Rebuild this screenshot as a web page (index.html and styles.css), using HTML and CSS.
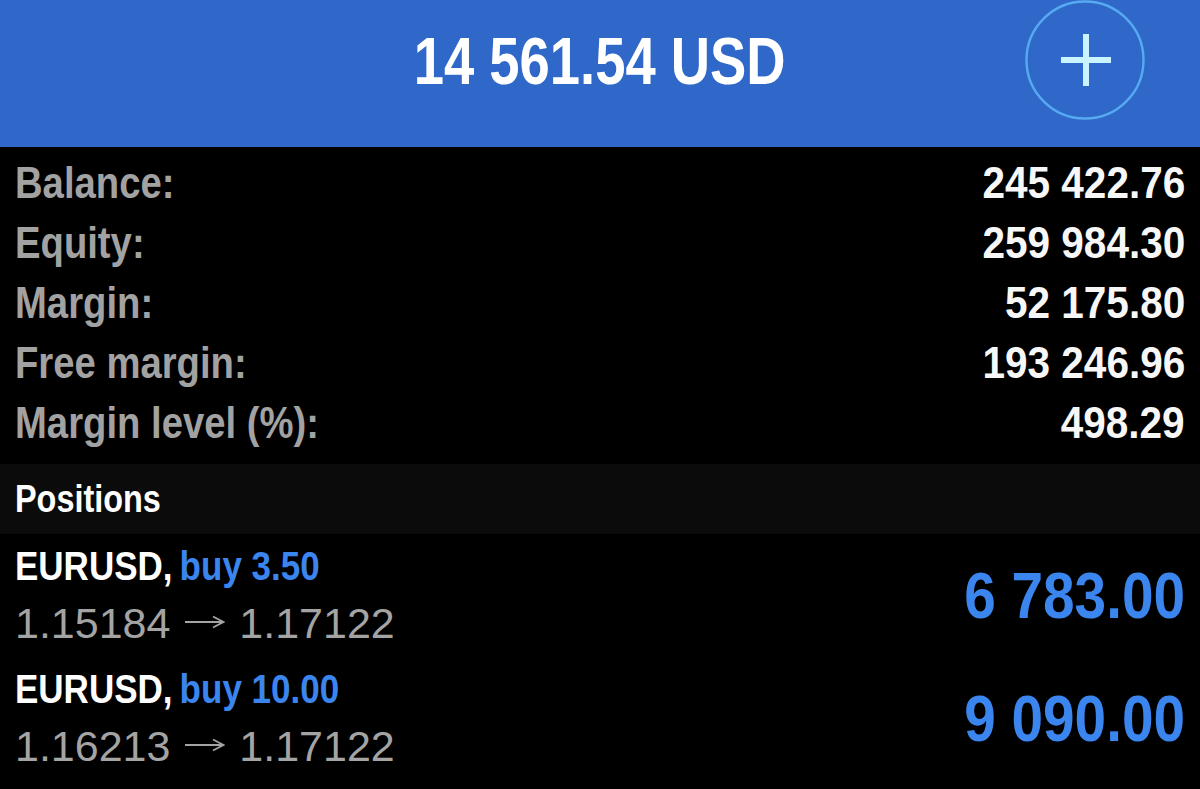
FILE: index.html
```html
<!DOCTYPE html>
<html>
<head>
<meta charset="utf-8">
<link rel="stylesheet" href="styles.css">
</head>
<body>
<header class="topbar">
  <div class="title"><span class="title-text">14 561.54 USD</span></div>
  <div class="add-btn">
    <svg width="120" height="120" viewBox="0 0 120 120">
      <circle cx="60" cy="60" r="58.5" fill="none" stroke="#56aaf2" stroke-width="2.4"/>
      <rect x="36" y="57" width="50" height="6" fill="#c9f3ff"/>
      <rect x="58" y="34" width="6" height="52" fill="#c9f3ff"/>
    </svg>
  </div>
</header>
<section class="summary">
  <div class="row"><span class="label">Balance:</span><span class="value">245 422.76</span></div>
  <div class="row"><span class="label">Equity:</span><span class="value">259 984.30</span></div>
  <div class="row"><span class="label">Margin:</span><span class="value">52 175.80</span></div>
  <div class="row"><span class="label">Free margin:</span><span class="value">193 246.96</span></div>
  <div class="row"><span class="label">Margin level (%):</span><span class="value">498.29</span></div>
</section>
<div class="section-head"><span class="head-text">Positions</span></div>
<section class="positions">
  <div class="pos">
    <div class="pos-info">
      <div class="pos-title"><span class="title-line">EURUSD, <span class="buy">buy 3.50</span></span></div>
      <div class="pos-price">1.15184 <svg class="arrow" width="40" height="14" viewBox="0 0 40 14"><path d="M0 7 H38.5 M28 1.5 L38.5 7 L28 12.5" fill="none" stroke="#a4a4a4" stroke-width="1.8"/></svg> 1.17122</div>
    </div>
    <div class="profit">6 783.00</div>
  </div>
  <div class="pos">
    <div class="pos-info">
      <div class="pos-title"><span class="title-line">EURUSD, <span class="buy">buy 10.00</span></span></div>
      <div class="pos-price">1.16213 <svg class="arrow" width="40" height="14" viewBox="0 0 40 14"><path d="M0 7 H38.5 M28 1.5 L38.5 7 L28 12.5" fill="none" stroke="#a4a4a4" stroke-width="1.8"/></svg> 1.17122</div>
    </div>
    <div class="profit">9 090.00</div>
  </div>
</section>
</body>
</html>
```
FILE: styles.css
```css
html, body {
  margin: 0;
  padding: 0;
  background: #000;
  height: 100%;
  overflow: hidden;
}
body {
  font-family: "Liberation Sans", Arial, sans-serif;
  color: #fff;
}
.topbar {
  height: 147px;
  background: #2f68c8;
  display: flex;
  align-items: center;
  justify-content: center;
  position: relative;
}
.title {
  font-weight: bold;
  font-size: 66px;
  color: #fff;
  margin-top: -26px;
}
.title-text {
  display: inline-block;
  transform: scaleX(0.824);
  transform-origin: center;
}
.add-btn {
  position: absolute;
  left: 1025px;
  top: 0;
  width: 120px;
  height: 120px;
}
.add-btn svg { display: block; }
.summary {
  padding-top: 6px;
  padding-bottom: 11px;
}
.row {
  display: flex;
  justify-content: space-between;
  padding: 0 15px;
  height: 60px;
  line-height: 60px;
  font-size: 45px;
  font-weight: bold;
}
.label {
  color: #a2a2a2;
  display: inline-block;
  transform: scaleX(0.85);
  transform-origin: left center;
}
.value {
  color: #f7f7f7;
  display: inline-block;
  transform: scaleX(0.9);
  transform-origin: right center;
}
.section-head {
  background: #0b0b0b;
  height: 70px;
  line-height: 70px;
  padding: 0 15px;
  font-size: 38px;
  font-weight: bold;
  color: #fff;
}
.head-text {
  display: inline-block;
  transform: scaleX(0.853);
  transform-origin: left center;
}
.pos {
  display: flex;
  justify-content: space-between;
  align-items: center;
  padding: 4px 15px 5px;
}
.pos-title {
  font-size: 40px;
  font-weight: bold;
  line-height: 56px;
  color: #fff;
}
.title-line {
  display: inline-block;
  transform: scaleX(0.875);
  transform-origin: left center;
}
.buy {
  color: #3b85ef;
  margin-left: -3px;
}
.pos-price {
  font-size: 43px;
  line-height: 58px;
  color: #a4a4a4;
}
.arrow {
  vertical-align: 9px;
  margin: 0 2px 0 3px;
}
.profit {
  font-size: 65px;
  font-weight: bold;
  color: #3b85ef;
  display: inline-block;
  transform: scaleX(0.873);
  transform-origin: right center;
}
```
